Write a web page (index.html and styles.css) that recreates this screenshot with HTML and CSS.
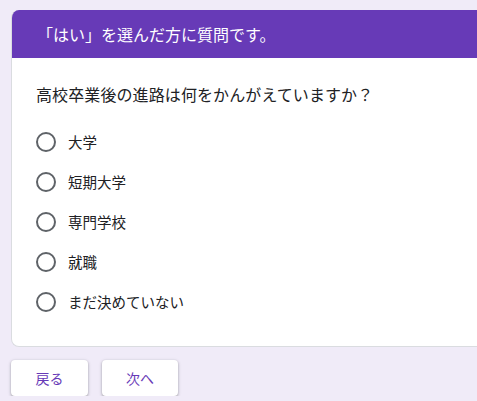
FILE: index.html
```html
<!DOCTYPE html>
<html lang="ja">
<head>
<meta charset="utf-8">
<link rel="stylesheet" href="styles.css">
</head>
<body>
<div class="page">
  <div class="card">
    <div class="card-header">「はい」を選んだ方に質問です。</div>
    <div class="card-body">
      <div class="question">高校卒業後の進路は何をかんがえていますか？</div>
      <div class="options">
        <div class="option"><span class="radio"></span><span class="label">大学</span></div>
        <div class="option"><span class="radio"></span><span class="label">短期大学</span></div>
        <div class="option"><span class="radio"></span><span class="label">専門学校</span></div>
        <div class="option"><span class="radio"></span><span class="label">就職</span></div>
        <div class="option"><span class="radio"></span><span class="label">まだ決めていない</span></div>
      </div>
    </div>
  </div>
  <div class="buttons">
    <button class="btn btn-back">戻る</button>
    <button class="btn btn-next">次へ</button>
  </div>
</div>
</body>
</html>
```
FILE: styles.css
```css
html, body {
  margin: 0;
  padding: 0;
  background: #f0ebf8;
  overflow: hidden;
  font-family: "Noto Sans CJK JP", "Noto Sans", sans-serif;
  color: #202124;
}
.page {
  padding: 10px 0 0 11px;
}
.card {
  background: #fff;
  border: 1px solid #dadce0;
  border-top: none;
  border-right: none;
  border-radius: 8px 0 0 8px;
  overflow: hidden;
}
.card-header {
  background: #673ab7;
  color: #fff;
  font-size: 16px;
  line-height: 24px;
  padding: 12px 24px 12px 25px;
  height: 24px;
}
.card-body {
  padding: 24px;
}
.question {
  font-size: 16px;
  line-height: 24px;
  letter-spacing: 0.1px;
}
.options {
  margin-top: 16px;
  display: flex;
  flex-direction: column;
}
.option {
  display: flex;
  align-items: center;
  height: 40px;
}
.radio {
  width: 16px;
  height: 16px;
  border: 2px solid #5f6368;
  border-radius: 50%;
  flex: none;
}
.label {
  margin-left: 12px;
  font-size: 14.5px;
  line-height: 20px;
}
.buttons {
  display: flex;
  gap: 14px;
  margin-top: 13px;
}
.btn {
  height: 36px;
  background: #fff;
  border: none;
  border-radius: 4px;
  box-shadow: 0 1px 2px rgba(60, 64, 67, 0.3), 0 1px 3px 1px rgba(60, 64, 67, 0.15);
  color: #673ab7;
  font-family: "Noto Sans CJK JP", "Noto Sans", sans-serif;
  font-size: 14px;
  padding: 0;
}
.btn-back { width: 77px; }
.btn-next { width: 76px; }
```
